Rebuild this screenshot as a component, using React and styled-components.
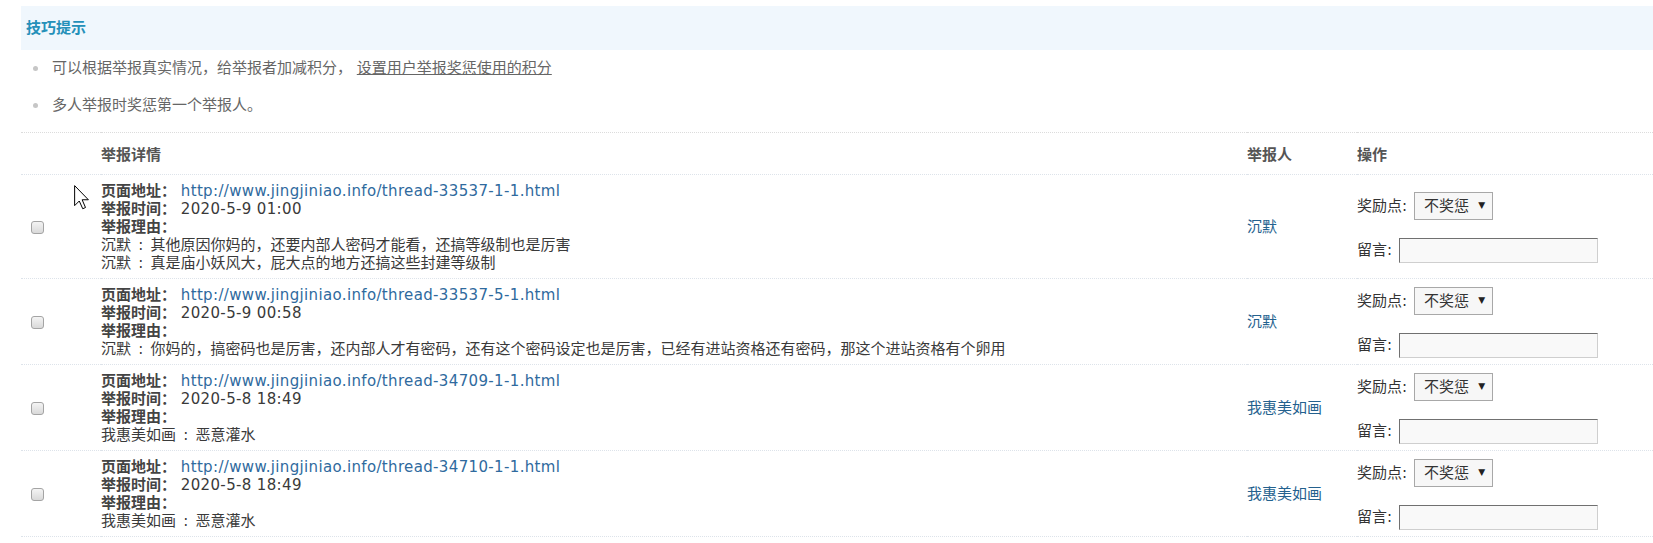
import React from 'react'
import styled, { createGlobalStyle } from 'styled-components'

const GlobalStyle = createGlobalStyle`
  html, body {
    margin: 0;
    padding: 0;
    background: #fff;
  }
  body {
    font-family: "DejaVu Sans", "Noto Sans CJK SC", sans-serif;
    font-size: 15px;
    color: #333;
  }
`

const Page = styled.div`
  position: relative;
  padding: 6px 0 0 21px;
  overflow: hidden;
`

const TipHead = styled.div`
  height: 44px;
  line-height: 44px;
  padding-left: 5px;
  background: #f0f7fd;
  color: #2590b9;
  font-weight: bold;
`

const TipList = styled.ul`
  list-style: none;
  margin: 0;
  padding: 0;
`

const Tip = styled.li`
  padding: 9px 0 10px;
  line-height: 18px;
  color: #666;

  &::before {
    content: '';
    display: inline-block;
    width: 5px;
    height: 5px;
    border-radius: 50%;
    background: #c6c6c6;
    margin: 0 14px 0 12px;
    vertical-align: middle;
  }
`

const TipLink = styled.a`
  color: #666;
  text-decoration: underline;
`

const Table = styled.table`
  width: 100%;
  table-layout: fixed;
  border-collapse: separate;
  border-spacing: 0;
  margin-top: 8px;
`

const Th = styled.th`
  width: ${p => p.$w || 'auto'};
  height: 41px;
  padding: 0;
  text-align: left;
  font-weight: bold;
  color: #555;
  border-top: 1px dotted #dcdcdc;
`

const Td = styled.td`
  padding: ${p => (p.$check ? '7px 0 6px 6px' : '7px 0 6px')};
  vertical-align: middle;
  line-height: 18px;
  color: #3a3a3a;
  border-top: 1px dotted #dde3ea;
`

const Check = styled.input.attrs({ type: 'checkbox' })`
  appearance: none;
  width: 13px;
  height: 13px;
  margin: 0 0 0 4px;
  border: 1px solid #a4a4a4;
  border-radius: 3px;
  background: linear-gradient(#f4f4f4, #d9d9d9);
  vertical-align: middle;
`

const Line = styled.div`
  line-height: 18px;
  white-space: nowrap;
`

const Label = styled.b`
  font-weight: bold;
  color: #444;
`

const Latin = styled.span`
  letter-spacing: 0.35px;
`

const Sep = styled.span`
  padding: 0 2.5px;
`

const UrlLink = styled.a`
  color: #2f6a9e;
  text-decoration: none;
  letter-spacing: 0.35px;
`

const Reporter = styled.a`
  color: #24618e;
  text-decoration: none;
`

const Field = styled.div`
  display: flex;
  align-items: center;
  color: #333;

  & + & {
    margin-top: 18px;
  }
`

const SelectWrap = styled.span`
  position: relative;
  display: inline-block;
  margin-left: 7px;

  &::after {
    content: '▼';
    position: absolute;
    right: 8px;
    top: 9px;
    font-size: 9px;
    line-height: 9px;
    color: #222;
    pointer-events: none;
  }
`

const Select = styled.select`
  appearance: none;
  width: 79px;
  height: 28px;
  box-sizing: border-box;
  padding: 0 0 0 9px;
  border: 1px solid #a8a8a8;
  border-radius: 0;
  background: #f7f7f7;
  font: inherit;
  color: #333;
`

const TextBox = styled.input.attrs({ type: 'text' })`
  width: 199px;
  height: 25px;
  box-sizing: border-box;
  margin: 0 0 0 7px;
  border: 1px solid;
  border-color: #707070 #cfcfcf #cfcfcf #707070;
  background: #f9f9f9;
  font: inherit;
`

const Cursor = styled.svg`
  position: absolute;
  left: 74px;
  top: 185px;
`

const reports = [
  {
    url: 'http://www.jingjiniao.info/thread-33537-1-1.html',
    time: '2020-5-9 01:00',
    user: '沉默',
    reasons: [['沉默', '其他原因你妈的，还要内部人密码才能看，还搞等级制也是厉害'], ['沉默', '真是庙小妖风大，屁大点的地方还搞这些封建等级制']],
  },
  {
    url: 'http://www.jingjiniao.info/thread-33537-5-1.html',
    time: '2020-5-9 00:58',
    user: '沉默',
    reasons: [['沉默', '你妈的，搞密码也是厉害，还内部人才有密码，还有这个密码设定也是厉害，已经有进站资格还有密码，那这个进站资格有个卵用']],
  },
  {
    url: 'http://www.jingjiniao.info/thread-34709-1-1.html',
    time: '2020-5-8 18:49',
    user: '我惠美如画',
    reasons: [['我惠美如画', '恶意灌水']],
  },
  {
    url: 'http://www.jingjiniao.info/thread-34710-1-1.html',
    time: '2020-5-8 18:49',
    user: '我惠美如画',
    reasons: [['我惠美如画', '恶意灌水']],
  },
  {
    url: 'http://www.jingjiniao.info/thread-34711-1-1.html',
    time: '2020-5-8 18:48',
    user: '我惠美如画',
    reasons: [['我惠美如画', '恶意灌水']],
  },
]

const App = () => {
  return (
    <Page>
      <GlobalStyle />
      <TipHead>技巧提示</TipHead>
      <TipList>
        <Tip>
          可以根据举报真实情况，给举报者加减积分， <TipLink href="#">设置用户举报奖惩使用的积分</TipLink>
        </Tip>
        <Tip>多人举报时奖惩第一个举报人。</Tip>
      </TipList>
      <Table>
        <thead>
          <tr>
            <Th $w="80px"></Th>
            <Th $w="1146px">举报详情</Th>
            <Th $w="110px">举报人</Th>
            <Th>操作</Th>
          </tr>
        </thead>
        <tbody>
          {reports.map((r, i) => (
            <tr key={i}>
              <Td $check>
                <Check />
              </Td>
              <Td>
                <Line>
                  <Label>页面地址：</Label> <UrlLink href="#">{r.url}</UrlLink>
                </Line>
                <Line>
                  <Label>举报时间：</Label> <Latin>{r.time}</Latin>
                </Line>
                <Line>
                  <Label>举报理由：</Label>
                </Line>
                {r.reasons.map(([who, text], j) => (
                  <Line key={j}>
                    {who}<Sep> : </Sep>{text}
                  </Line>
                ))}
              </Td>
              <Td>
                <Reporter href="#">{r.user}</Reporter>
              </Td>
              <Td>
                <Field>
                  奖励点:
                  <SelectWrap>
                    <Select defaultValue="0">
                      <option value="0">不奖惩</option>
                    </Select>
                  </SelectWrap>
                </Field>
                <Field>
                  留言:
                  <TextBox />
                </Field>
              </Td>
            </tr>
          ))}
        </tbody>
      </Table>
      <Cursor width="15" height="25" viewBox="0 0 12 20">
        <path d="M0.5 0.5 L0.5 16.5 L4.2 12.8 L7 19 L9.2 18 L6.5 11.8 L11.5 11.8 Z" fill="#fff" stroke="#000" strokeWidth="0.8" strokeLinejoin="miter" />
      </Cursor>
    </Page>
  )
}

export default App
